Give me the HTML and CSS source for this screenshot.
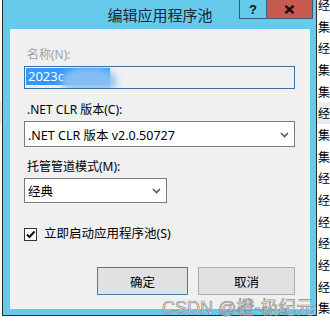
FILE: index.html
```html
<!DOCTYPE html>
<html>
<head>
  <meta charset="UTF-8">
  <title>编辑应用程序池</title>
  <link rel="stylesheet" href="styles.css">
</head>
<body>
  <div class="desk">
    <div class="list-view">
      <div class="lv-row"><span class="c-state"></span><span class="c-ver"></span><span class="c-mode">经</span></div>
      <div class="lv-row"><span class="c-state"></span><span class="c-ver"></span><span class="c-mode">集</span></div>
      <div class="lv-row"><span class="c-state"></span><span class="c-ver"></span><span class="c-mode">经</span></div>
      <div class="lv-row"><span class="c-state"></span><span class="c-ver"></span><span class="c-mode">集</span></div>
      <div class="lv-row"><span class="c-state"></span><span class="c-ver"></span><span class="c-mode">集</span></div>
      <div class="lv-row hover"><span class="c-state"></span><span class="c-ver"></span><span class="c-mode">经</span></div>
      <div class="lv-row"><span class="c-state"></span><span class="c-ver"></span><span class="c-mode">集</span></div>
      <div class="lv-row"><span class="c-state"></span><span class="c-ver"></span><span class="c-mode">集</span></div>
      <div class="lv-row"><span class="c-state"></span><span class="c-ver"></span><span class="c-mode">经</span></div>
      <div class="lv-row"><span class="c-state"></span><span class="c-ver"></span><span class="c-mode">经</span></div>
      <div class="lv-row"><span class="c-state"></span><span class="c-ver"></span><span class="c-mode">经</span></div>
      <div class="lv-row"><span class="c-state"></span><span class="c-ver"></span><span class="c-mode">经</span></div>
      <div class="lv-row"><span class="c-state"></span><span class="c-ver"></span><span class="c-mode">经</span></div>
      <div class="lv-row"><span class="c-state"></span><span class="c-ver"></span><span class="c-mode">经</span></div>
      <div class="lv-row"><span class="c-state"></span><span class="c-ver"></span><span class="c-mode">集</span></div>
      <div class="lv-row"><span class="c-state">已启动</span><span class="c-ver">v4.0</span><span class="c-mode">经</span></div>
    </div>

    <div class="dialog">
      <div class="titlebar">
        <span class="title">编辑应用程序池</span>
        <div class="caption-btns">
          <span class="cap-btn help">?</span>
          <span class="cap-btn close">
            <svg width="11" height="9" viewBox="0 0 11 9"><path d="M1.5 0.8 L9.5 8.2 M9.5 0.8 L1.5 8.2" stroke="#111" stroke-width="2.4" fill="none"/></svg>
          </span>
        </div>
      </div>
      <div class="client">
        <div class="lbl disabled">名称(N):</div>
        <div class="textbox">
          <span class="selected">2023c</span>
          <span class="smudge"></span>
        </div>

        <div class="lbl">.NET CLR 版本(C):</div>
        <div class="combo wide">
          <span>.NET CLR 版本 v2.0.50727</span>
          <svg class="chev" width="9" height="6" viewBox="0 0 9 6"><path d="M1 1 L4.5 4.5 L8 1" stroke="#555" stroke-width="1.6" fill="none"/></svg>
        </div>

        <div class="lbl">托管管道模式(M):</div>
        <div class="combo short">
          <span>经典</span>
          <svg class="chev" width="9" height="6" viewBox="0 0 9 6"><path d="M1 1 L4.5 4.5 L8 1" stroke="#555" stroke-width="1.6" fill="none"/></svg>
        </div>

        <div class="check-row">
          <span class="checkbox">
            <svg width="11" height="11" viewBox="0 0 11 11"><path d="M2 5.5 L4.5 8 L9.5 2.5" stroke="#111" stroke-width="2" fill="none"/></svg>
          </span>
          <span>立即启动应用程序池(S)</span>
        </div>

        <div class="actions">
          <button class="btn default">确定</button>
          <button class="btn cancel">取消</button>
        </div>
      </div>
    </div>

    <div class="watermark">CSDN @橙-极纪元</div>
  </div>
</body>
</html>
```

FILE: styles.css
```css
body {
  margin: 0;
  background-color: #ffffff;
  font-family: "Noto Sans", "Noto Sans CJK SC", sans-serif;
  font-size: 12px;
  color: #000;
}

.desk {
  position: relative;
  width: 330px;
  height: 324px;
  overflow: hidden;
}

/* list view behind the dialog */
.list-view {
  margin-top: -6px;
}

.lv-row {
  display: flex;
  height: 21.67px;
  line-height: 21.67px;
  padding-left: 180px;
  font-size: 12px;
}

.lv-row.hover {
  background-color: #ececec;
}

.c-state {
  width: 60px;
  font-family: "Noto Sans CJK SC", sans-serif;
}

.c-ver {
  width: 80px;
}

.c-mode {
  font-family: "Noto Sans CJK SC", sans-serif;
}

/* dialog window */
.dialog {
  position: absolute;
  left: 2px;
  top: 0;
  width: 300px;
  border: 1px solid #2e2e2e;
  border-top: none;
  background-color: #66cbeb;
  padding: 0 6px 6px 7px;
}

.titlebar {
  position: relative;
  height: 29px;
  text-align: center;
}

.title {
  display: inline-block;
  margin-top: 5px;
  font-family: "Noto Sans CJK SC", sans-serif;
  font-size: 15px;
  line-height: 20px;
  color: #1b2533;
}

.caption-btns {
  position: absolute;
  top: 0;
  right: -3px;
  display: flex;
}

.cap-btn {
  display: flex;
  align-items: center;
  justify-content: center;
  height: 19px;
  box-sizing: border-box;
}

.help {
  width: 27px;
  border: 1px solid #3a5a78;
  border-top: none;
  border-right: none;
  font-family: "Liberation Sans", sans-serif;
  font-weight: bold;
  font-size: 13px;
  color: #111;
}

.close {
  width: 47px;
  background-color: #c75a50;
  border: 1px solid #3a5a78;
  border-top: none;
}

.client {
  background-color: #f0f0f0;
  height: 280px;
  padding: 18px 15px 0 14px;
  box-sizing: border-box;
}

.lbl {
  line-height: 16px;
  margin-left: 3px;
  color: #000;
}

.lbl.disabled {
  color: #a0a0a0;
}

.textbox {
  position: relative;
  height: 23px;
  margin-top: 3px;
  border: 1px solid #3d6f9f;
  box-sizing: border-box;
  padding: 1px;
  overflow: hidden;
}

.selected {
  display: block;
  width: 82px;
  height: 17px;
  line-height: 17px;
  background-color: #3399ff;
  color: #fff;
  padding-left: 2px;
  font-size: 13px;
}

.smudge {
  position: absolute;
  left: 36px;
  top: 0;
  width: 56px;
  height: 28px;
  border-radius: 50%;
  background-color: #8cc2f2;
  filter: blur(3px);
  opacity: 0.9;
}

.textbox + .lbl {
  margin-top: 13px;
}

.combo {
  display: flex;
  align-items: center;
  justify-content: space-between;
  margin-top: 3px;
  border: 1px solid #7a7a7a;
  background-color: #fff;
  box-sizing: border-box;
  padding: 0 5px 0 3px;
  font-size: 12.5px;
}

.combo.wide {
  height: 26px;
}

.combo.short {
  width: 143px;
  height: 25px;
}

.combo.wide + .lbl {
  margin-top: 12px;
}

.chev {
  margin-top: 1px;
}

.check-row {
  display: flex;
  align-items: center;
  gap: 7px;
  margin-top: 23px;
  line-height: 16px;
  font-size: 12.5px;
}

.checkbox {
  display: flex;
  align-items: center;
  justify-content: center;
  width: 13px;
  height: 13px;
  border: 1px solid #333;
  background-color: #fff;
  box-sizing: border-box;
}

.actions {
  display: flex;
  justify-content: flex-end;
  gap: 10px;
  margin-top: 25px;
}

.btn {
  height: 28px;
  background-color: #e1e1e1;
  border: 1px solid #adadad;
  font-family: "Noto Sans CJK SC", sans-serif;
  font-size: 12.5px;
  padding: 0;
}

.btn.default {
  width: 91px;
  border-color: #3c7fb1;
}

.btn.cancel {
  width: 97px;
}

.watermark {
  position: absolute;
  left: 162px;
  top: 293px;
  font-family: "Liberation Sans", "Noto Sans CJK SC", sans-serif;
  font-size: 18px;
  color: rgba(232, 232, 232, 0.9);
  -webkit-text-stroke: 0.7px rgba(100, 100, 100, 0.7);
}
```
